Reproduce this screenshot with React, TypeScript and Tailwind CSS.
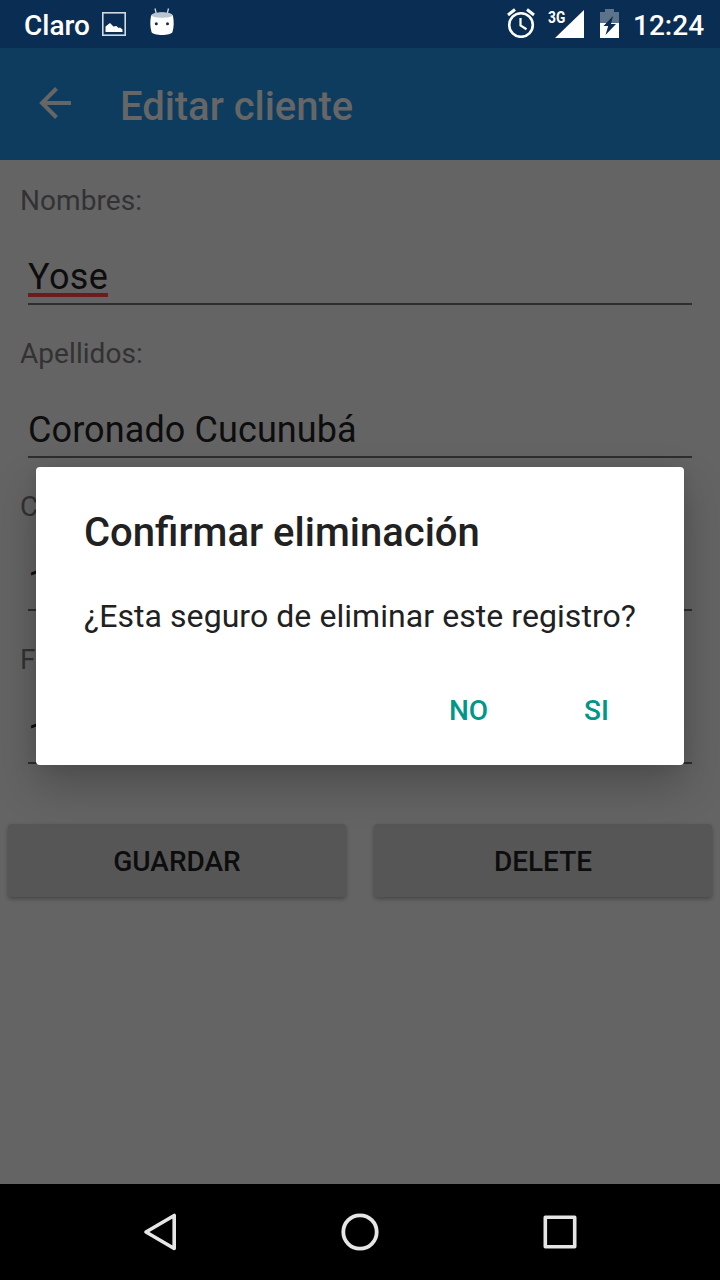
import React from "react";

function StatusBar() {
  return (
    <header className="flex h-12 items-center bg-[#0a2d53] pl-6 pr-4 text-[28px] font-medium leading-[33px] text-white">
      <span className="w-[66px] pt-[3px]">Claro</span>
      <svg className="ml-3 h-6 w-6" viewBox="0 0 24 24">
        <rect x="0.8" y="0.8" width="22.4" height="22.4" fill="none" stroke="#d3dae1" strokeWidth="1.6" />
        <path d="M3.500 20v-5.500l4.500-3.500 3.500 3.500 3-.500 2 2 1.500-.500 2.500 2v2.500z" fill="#fff" />
      </svg>
      <svg className="ml-6 h-7 w-6 -translate-y-[2px]" viewBox="0 0 24 28">
        <path d="M5 0.500l1.500 6M18.500 0.500L17 6.500" stroke="#d3dae1" strokeWidth="1.300" />
        <path d="M1 8C2 3.500 22 3.500 23 8C24 13 24 19 22.500 24C21 28 3 28 1.500 24C0 19 0 13 1 8z" fill="#fff" />
        <path d="M1 7.500C3 3.300 21 3.300 23 7.500C20 10.500 4 10.500 1 7.500z" fill="#bac6d0" />
        <circle cx="6.300" cy="15.700" r="1.500" fill="#0a2d53" />
        <circle cx="17.500" cy="15.700" r="1.500" fill="#0a2d53" />
      </svg>
      <div className="flex-1" />
      <svg className="h-[30px] w-7 -translate-y-px" viewBox="0 0 28 30" fill="none" stroke="#fff">
        <circle cx="14" cy="17" r="11.800" strokeWidth="2.600" />
        <path d="M13.500 10v7.500l6 3.800" strokeWidth="2.200" />
        <path d="M1 7L8 1.500M20 1.500L27 7" strokeWidth="3" />
      </svg>
      <div className="ml-[13px] flex h-[30px] w-9 items-start">
        <span className="w-[18px] shrink-0 text-[16px] font-bold leading-[17px]">
          <span className="block origin-left scale-x-[0.86]">3G</span>
        </span>
        <svg className="-ml-[11px] h-[30px] w-[29px] shrink-0" viewBox="0 0 29 30">
          <path d="M29 1v28H0z" fill="#fff" />
        </svg>
      </div>
      <svg className="ml-4 h-[30px] w-[19px]" viewBox="0 0 19 30">
        <path d="M0 3h5V0h9v3h5v11H0z" fill="#5d738a" />
        <path d="M0 14h19v15H0z" fill="#fff" />
        <path d="M13 7L3.500 17h4.700L5.500 26 16 15h-5z" fill="#0a2d53" />
      </svg>
      <span className="ml-[14px] w-[71px] whitespace-nowrap pt-[3px]">12:24</span>
    </header>
  );
}

function Toolbar() {
  return (
    <div className="flex h-28 items-center bg-[#0d3c5f] pl-[39px] text-[#666666]">
      <svg className="h-8 w-8 -translate-y-px" viewBox="0 0 32 32" fill="none" stroke="currentColor" strokeWidth="4">
        <path d="M32 16H3M17.500 1.500L3 16l14.500 14.500" />
      </svg>
      <h1 className="ml-[49px] pt-[5px] text-[40px] font-medium leading-[47px] tracking-[-0.04px]">Editar cliente</h1>
    </div>
  );
}

type FieldProps = { label: string; value: string; misspelled?: boolean };

function Field({ label, value, misspelled }: FieldProps) {
  return (
    <div className="h-[153px]">
      <div className="px-5 text-[28px] leading-[33px] tracking-[0.06px] text-[#323232]">{label}</div>
      <div className="mx-7 mt-[39px] flex h-[49px] items-start border-b-2 border-[#2e2e2e] text-[36px] leading-[42px] tracking-[0.1px] text-[#0d0d0d]">
        <span className={misspelled ? "h-[41px] w-20 border-b-4 border-[#6b1c1c] tracking-[0.4px]" : ""}>{value}</span>
      </div>
    </div>
  );
}

function FormButton({ children }: { children: React.ReactNode }) {
  return (
    <button className="h-[73px] flex-1 rounded-[4px] bg-[#565656] pt-px text-[28px] font-medium leading-[33px] text-[#0d0d0d] shadow-[0_2px_4px_rgba(0,0,0,0.3)]">
      {children}
    </button>
  );
}

function NavigationBar() {
  return (
    <nav className="flex h-24 items-center justify-between bg-black px-[140px]">
      <svg className="h-10 w-10" viewBox="0 0 40 40" fill="none" stroke="#e6e6e6" strokeWidth="3.600" strokeLinejoin="round">
        <path d="M34.200 3.500v33L6 20z" />
      </svg>
      <svg className="h-10 w-10" viewBox="0 0 40 40" fill="none" stroke="#e6e6e6" strokeWidth="3.800">
        <circle cx="20" cy="20" r="16.700" />
      </svg>
      <svg className="h-10 w-10" viewBox="0 0 40 40" fill="none" stroke="#e6e6e6" strokeWidth="3.600" strokeLinejoin="round">
        <rect x="5.300" y="5.300" width="29.400" height="29.400" />
      </svg>
    </nav>
  );
}

function ConfirmDialog() {
  return (
    <div role="dialog" className="absolute left-9 top-[467px] flex h-[298px] w-[648px] flex-col rounded-[4px] bg-white px-12 pt-[42px] text-[#212121] shadow-[0_20px_44px_rgba(0,0,0,0.24),0_0_14px_rgba(0,0,0,0.08)]">
      <h2 className="text-[40px] font-medium leading-[47px]">Confirmar eliminación</h2>
      <p className="mt-[41px] whitespace-nowrap text-[32px] leading-[38px] tracking-[0.06px]">¿Esta seguro de eliminar este registro?</p>
      <div className="mt-[59px] flex justify-end gap-24 pr-[27px] text-[28px] font-medium leading-[33px] text-[#009688]">
        <button>NO</button>
        <button>SI</button>
      </div>
    </div>
  );
}

export default function App() {
  return (
    <div className="relative flex h-[1280px] w-[720px] flex-col overflow-hidden bg-[#646464] font-[Roboto,sans-serif]">
      <StatusBar />
      <Toolbar />
      <main className="flex-1 pt-6">
        <Field label="Nombres:" value="Yose" misspelled />
        <Field label="Apellidos:" value="Coronado Cucunubá" />
        <Field label="C" value="1" />
        <Field label="F" value="1" />
        <div className="mt-7 flex gap-7 px-2">
          <FormButton>GUARDAR</FormButton>
          <FormButton>DELETE</FormButton>
        </div>
      </main>
      <NavigationBar />
      <ConfirmDialog />
    </div>
  );
}
